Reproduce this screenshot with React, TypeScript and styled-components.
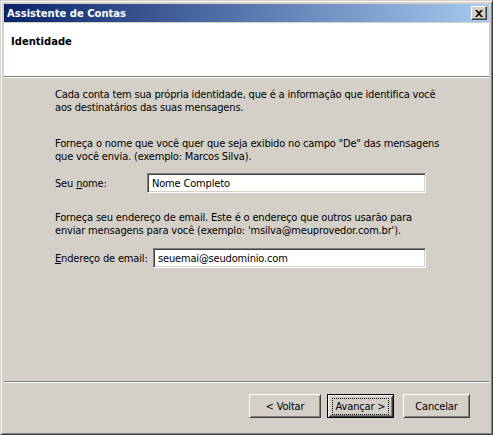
import React from "react";
import styled, { createGlobalStyle } from "styled-components";

const Global = createGlobalStyle`
  html, body { margin: 0; padding: 0; background: #ffffff; }
  body { font-family: "DejaVu Sans Condensed", "DejaVu Sans", sans-serif; font-size: 11px; color: #000; letter-spacing: -0.17px; }
  * { box-sizing: border-box; }
`;

const Window = styled.div`
  width: 493px;
  height: 435px;
  display: flex;
  flex-direction: column;
  background: #d4d0c8;
  border: 1px solid;
  border-color: #d4d0c8 #404040 #404040 #d4d0c8;
  box-shadow: inset 1px 1px #ffffff, inset -1px -1px #808080;
  padding: 3px;
`;

const TitleBar = styled.div`
  height: 18px;
  flex: none;
  display: flex;
  align-items: center;
  justify-content: space-between;
  padding: 0 2px 0 3px;
  margin-bottom: 1px;
  background: linear-gradient(to right, #0a246a, #a6caf0);
`;

const TitleText = styled.span`
  color: #ffffff;
  font-family: "DejaVu Sans", sans-serif;
  font-weight: bold;
  font-size: 10px;
  letter-spacing: 0;
`;

const CloseButton = styled.div`
  width: 16px;
  height: 14px;
  background: #d4d0c8;
  border: 1px solid;
  border-color: #ffffff #404040 #404040 #ffffff;
  box-shadow: inset -1px -1px #808080;
  display: flex;
  align-items: center;
  justify-content: center;
`;

const Client = styled.div`
  flex: 1;
  display: flex;
  flex-direction: column;
`;

const Header = styled.div`
  height: 53px;
  flex: none;
  background: #ffffff;
  padding: 13px 0 0 7px;
  font-family: "DejaVu Sans", sans-serif;
  font-weight: bold;
  font-size: 10px;
  letter-spacing: 0;
`;

const Separator = styled.div`
  height: 2px;
  flex: none;
  border-top: 1px solid #808080;
  border-bottom: 1px solid #ffffff;
`;

const Body = styled.div`
  flex: 1;
  display: flex;
  flex-direction: column;
  padding: 10px 0 0 51px;
`;

const Para = styled.p<{ $top: number }>`
  margin: ${(p) => p.$top}px 0 0 0;
  line-height: 13px;
`;

const FieldRow = styled.div<{ $top: number; $labelWidth: number; $boxWidth: number }>`
  margin-top: ${(p) => p.$top}px;
  display: grid;
  grid-template-columns: ${(p) => p.$labelWidth}px ${(p) => p.$boxWidth}px;
  align-items: center;
`;

const Label = styled.span``;

const TextBox = styled.div`
  height: 20px;
  background: #ffffff;
  border: 1px solid;
  border-color: #808080 #ffffff #ffffff #808080;
  box-shadow: inset 1px 1px #404040, inset -1px -1px #d4d0c8;
  padding: 0 0 0 4px;
  display: flex;
  align-items: center;
`;

const Footer = styled.div`
  height: 48px;
  flex: none;
  display: flex;
  justify-content: flex-end;
  align-items: flex-start;
  padding: 11px 19px 0 0;
`;

const Button = styled.div<{ $default?: boolean; $gap?: number; $width: number }>`
  width: ${(p) => p.$width}px;
  height: 24px;
  margin-left: ${(p) => p.$gap ?? 0}px;
  display: flex;
  align-items: center;
  justify-content: center;
  background: #d4d0c8;
  border: 1px solid;
  border-color: ${(p) => (p.$default ? "#000000" : "#ffffff #404040 #404040 #ffffff")};
  box-shadow: ${(p) =>
    p.$default
      ? "inset 1px 1px #ffffff, inset -1px -1px #404040, inset 2px 2px #d4d0c8, inset -2px -2px #808080"
      : "inset 1px 1px #d4d0c8, inset -1px -1px #808080"};
`;

const FocusRing = styled.span`
  padding: 1px 3px;
  outline: 1px dotted #000;
`;

export default function App() {
  return (
    <>
      <Global />
      <Window>
        <TitleBar>
          <TitleText>Assistente de Contas</TitleText>
          <CloseButton>
            <svg width="8" height="7" viewBox="0 0 8 7">
              <path d="M0 0h2l2 2 2-2h2L5 3.5 8 7H6L4 5 2 7H0l3-3.5z" fill="#000" />
            </svg>
          </CloseButton>
        </TitleBar>
        <Client>
          <Header>Identidade</Header>
          <Separator />
          <Body>
            <Para $top={0}>
              Cada conta tem sua própria identidade, que é a informação que identifica você
              <br />
              aos destinatários das suas mensagens.
            </Para>
            <Para $top={23}>
              Forneça o nome que você quer que seja exibido no campo "De" das mensagens
              <br />
              que você envia. (exemplo: Marcos Silva).
            </Para>
            <FieldRow $top={10} $labelWidth={92} $boxWidth={279}>
              <Label>
                Seu <u>n</u>ome:
              </Label>
              <TextBox>Nome Completo</TextBox>
            </FieldRow>
            <Para $top={18}>
              Forneça seu endereço de email. Este é o endereço que outros usarão para
              <br />
              enviar mensagens para você (exemplo: 'msilva@meuprovedor.com.br').
            </Para>
            <FieldRow $top={11} $labelWidth={98} $boxWidth={273}>
              <Label>
                <u>E</u>ndereço de email:
              </Label>
              <TextBox>seuemai@seudominio.com</TextBox>
            </FieldRow>
          </Body>
          <Separator />
          <Footer>
            <Button $width={72}>&lt; Voltar</Button>
            <Button $default $gap={6} $width={67}>
              <FocusRing>Avançar &gt;</FocusRing>
            </Button>
            <Button $gap={9} $width={67}>Cancelar</Button>
          </Footer>
        </Client>
      </Window>
    </>
  );
}
